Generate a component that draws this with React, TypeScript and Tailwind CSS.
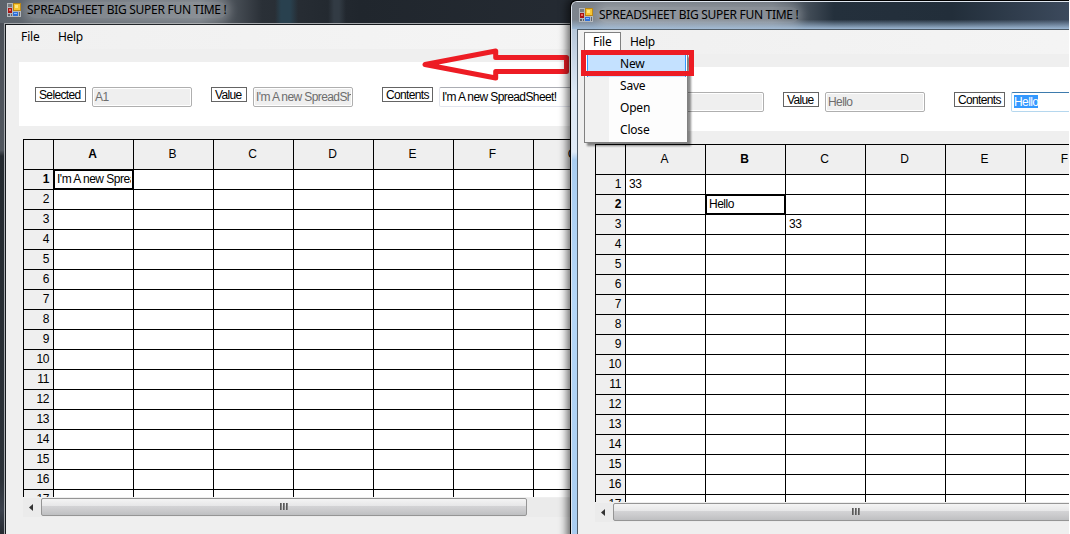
import React from "react";

const COLUMNS = ["A", "B", "C", "D", "E", "F", "G"];
const ROWS = Array.from({ length: 17 }, (_, i) => i + 1);

type Cells = Record<string, string>;

function AppIcon() {
  return (
    <svg width="14" height="14" viewBox="0 0 14 14" shapeRendering="crispEdges" className="shrink-0">
      <rect width="14" height="14" fill="#b4b8bd" />
      <rect x="1" y="1" width="4" height="3" fill="#777b80" />
      <rect x="6" y="0" width="8" height="8" fill="#b98412" />
      <rect x="7" y="1" width="6" height="6" fill="#f7c52f" />
      <rect x="8" y="2" width="3" height="3" fill="#ffe47e" />
      <rect x="1" y="5" width="4" height="5" fill="#a81414" />
      <rect x="2" y="6" width="2" height="2" fill="#ee6a5a" />
      <rect x="1" y="11" width="2" height="2" fill="#5f6368" />
      <rect x="4" y="11" width="1" height="2" fill="#5f6368" />
      <rect x="6" y="9" width="5" height="4" fill="#2f6fd6" />
      <rect x="7" y="10" width="3" height="1" fill="#8db9ff" />
      <rect x="12" y="9" width="1" height="4" fill="#5f6368" />
    </svg>
  );
}

function Caption({ children, width }: { children?: string; width: string }) {
  return (
    <div className={`${width} h-[15px] shrink-0 border border-[#646464] bg-white pl-[3px] text-[12px] leading-[14px] tracking-[-0.65px] text-black`}>
      {children}
    </div>
  );
}

function ReadOnlyBox({ text }: { text: string }) {
  return (
    <div className="h-5 w-[100px] shrink-0 overflow-hidden rounded-[2px] border border-[#afafaf] bg-white p-px">
      <div className="h-full overflow-hidden bg-[#efefef] pl-px text-[12px] leading-[17px] tracking-[-0.6px] whitespace-nowrap text-[#6d6d6d]">
        {text}
      </div>
    </div>
  );
}

function Sheet({ cells, col, row }: { cells: Cells; col: string; row: number }) {
  return (
    <div className="h-[358px] w-[560px] overflow-hidden border-t border-l border-black text-[12px] text-black">
      <div className="flex w-[600px]">
        <div className="h-[30px] w-[30px] shrink-0 border-r border-b border-black bg-[#efefef]" />
        {COLUMNS.map((c) => (
          <div
            key={c}
            className={`h-[30px] w-20 shrink-0 border-r border-b border-black bg-[#efefef] pr-[2px] text-center leading-[29px] ${c === col ? "font-bold" : ""}`}
          >
            {c}
          </div>
        ))}
      </div>
      {ROWS.map((r) => (
        <div key={r} className="flex w-[600px]">
          <div
            className={`h-5 w-[30px] shrink-0 border-r border-b border-black bg-[#efefef] pr-[4px] text-right leading-[19px] tracking-[-0.4px] ${r === row ? "font-bold" : ""}`}
          >
            {r}
          </div>
          {COLUMNS.map((c) => (
            <div
              key={c}
              className={`h-5 w-20 shrink-0 border-r border-b border-black bg-white pl-[3px] leading-[19px] tracking-[-0.5px] whitespace-nowrap ${
                c === col && r === row ? "shadow-[inset_1px_1px_0_#000,inset_-1px_-1px_0_#000]" : ""
              }`}
            >
              <div className="w-[74px] overflow-hidden">{cells[`${c}${r}`] ?? ""}</div>
            </div>
          ))}
        </div>
      ))}
    </div>
  );
}

function ScrollBar() {
  return (
    <div className="mt-px flex h-[19px] w-[560px] items-start bg-[#ebebeb]">
      <div className="flex h-[18px] w-[18px] items-center pl-[6px]">
        <svg width="5" height="7" viewBox="0 0 5 7">
          <path d="M4 0 L4 7 L0 3.5 Z" fill="#333" />
        </svg>
      </div>
      <div className="flex h-[18px] w-[486px] items-center justify-center gap-px rounded-[2px] border border-[#959595] bg-[linear-gradient(#f4f4f4_0%,#e7e7e8_42%,#d3d3d5_46%,#c9c9cb_75%,#bebfc1_100%)] pb-px">
        <i className="h-[7px] w-[2px] bg-[linear-gradient(90deg,#444,#999)]" />
        <i className="h-[7px] w-[2px] bg-[linear-gradient(90deg,#444,#999)]" />
        <i className="h-[7px] w-[2px] bg-[linear-gradient(90deg,#444,#999)]" />
      </div>
    </div>
  );
}

type ClientProps = {
  selected?: string;
  value: string;
  cells: Cells;
  col: string;
  row: number;
  menuOpen?: boolean;
};

function Client({ selected = "", value, cells, col, row, menuOpen }: ClientProps) {
  return (
    <div className="flex w-[600px] flex-col bg-[#efefef] font-['Liberation_Sans',Arial,sans-serif]">
      <div className="flex h-6 items-center bg-[linear-gradient(90deg,#f0f0f0,#f5f5f5)] font-['Noto_Sans',sans-serif] text-[12px] text-black">
        <span className="w-[37px] pl-[15px] tracking-[-0.1px]">{menuOpen ? "" : "File"}</span>
        <span className="pl-[15px] tracking-[-0.3px]">Help</span>
      </div>
      <div className="mt-[13px] ml-[13px] flex h-16 items-start bg-white pt-[25px] pl-4">
        <Caption width="w-[51px]">{menuOpen ? "" : "Selected"}</Caption>
        <div className="w-[6px]" />
        <ReadOnlyBox text={selected} />
        <div className="w-[19px]" />
        <Caption width="w-[36px]">Value</Caption>
        <div className="w-[6px]" />
        <ReadOnlyBox text={value} />
        <div className="w-[29px]" />
        <Caption width="w-[51px]">Contents</Caption>
        <div
          className={`ml-[6px] h-5 w-[160px] rounded-[2px] border bg-white py-[2px] pl-[2px] text-[12px] leading-[14px] tracking-[-0.6px] ${
            menuOpen ? "border-[#b5d7ee] border-t-[#3d7bad]" : "border-[#e3e5ed] border-t-[#abadb3]"
          }`}
        >
          <span className={menuOpen ? "inline-block h-[13px] bg-[#3399ff] text-white" : "text-black"}>{value}</span>
        </div>
      </div>
      <div className="mt-[13px] ml-[17px]">
        <Sheet cells={cells} col={col} row={row} />
        <ScrollBar />
      </div>
      <div className="h-10" />
    </div>
  );
}

function FileMenu() {
  return (
    <div className="absolute top-[32px] left-[584px] font-['Noto_Sans',sans-serif] text-[12px] text-black">
      <div className="h-[22px] w-[37px] border border-b-0 border-[#808080] bg-white pl-[8px] leading-[18px] tracking-[-0.1px]">File</div>
      <div className="h-[89px] w-[104px] border border-[#808080] shadow-[3px_3px_2px_rgba(0,0,0,0.45)]">
        <div className="h-full overflow-hidden bg-[linear-gradient(90deg,#f1f1f1_24px,#fdfdfd_24px)]">
          {["New", "Save", "Open", "Close"].map((item) => (
            <div
              key={item}
              className={`h-[22px] pl-[35px] leading-[18px] tracking-[-0.2px] ${
                item === "New" ? "bg-[#c4e1ff] shadow-[inset_2px_0_0_#fff,inset_3px_0_0_#3399ff,inset_-1px_0_0_#fff,inset_-2px_0_0_#3399ff]" : ""
              }`}
            >
              {item}
            </div>
          ))}
        </div>
      </div>
      <div className="absolute top-[18px] left-[-3px] h-[26px] w-[113px] border-[5px] border-[#ed1c24]" />
    </div>
  );
}

function Title() {
  return (
    <div className="flex items-center gap-[6px]">
      <AppIcon />
      <span className="rounded-full bg-white/20 font-['Noto_Sans',sans-serif] text-[12px] leading-4 tracking-[-0.28px] whitespace-nowrap text-black shadow-[0_0_8px_4px_rgba(255,255,255,0.2)]">
        SPREADSHEET BIG SUPER FUN TIME !
      </span>
    </div>
  );
}

export default function App() {
  return (
    <div className="h-[534px] w-[1070px] bg-white">
      <div className="relative h-[534px] w-[1069px] overflow-hidden">
        <div className="absolute inset-y-0 left-0 w-[600px] overflow-hidden bg-[linear-gradient(#4a4f57_0px,#50565e_150px,#23292f_156px,#2b3138_480px,#3a404c_510px,#252a30_534px)]">
          <div className="flex h-[23px] items-start bg-[linear-gradient(90deg,transparent_275px,#29414f_281px,#29414f_290px,transparent_298px,transparent_328px,#323b44_334px,#323b44_339px,transparent_346px),linear-gradient(90deg,#5c636b_0px,#6d747c_200px,#2a3037_262px,#20262d_360px,#252b33_600px)] pt-[2px] pl-[7px]">
            <Title />
          </div>
          <div className="ml-1 border-t border-l border-[#a5a8ac]">
            <div className="border-t border-l border-[#15191d]">
              <Client selected="A1" value="I'm A new SpreadSheet!" cells={{ A1: "I'm A new SpreadSheet!" }} col="A" row={1} />
            </div>
          </div>
        </div>

        <svg className="absolute top-[46px] left-[420px]" width="152" height="38" viewBox="420 46 152 38">
          <path
            d="M425 64.5 L495.7 51 V57.5 H566.5 V71.5 H495.7 V78 Z"
            fill="none"
            stroke="#ed1c24"
            strokeWidth="5"
            strokeLinejoin="round"
          />
        </svg>

        <div className="absolute top-0 left-[570px] h-[540px] w-[520px] rounded-tl-[6px] bg-black shadow-[-1px_0_9px_2px_rgba(0,0,0,0.6)]">
          <div className="ml-px h-full overflow-hidden pt-px">
            <div className="h-full overflow-hidden rounded-tl-[6px] border-t border-l border-[#dfe6ef] bg-[linear-gradient(#6c7480_0px,#b6c6d8_26px,#dce8f5_90px,#dfeaf6_150px,#a9cdf0_158px,#b5d7f8_300px,#a9cdf0_534px)]">
              <div className="flex h-[27px] items-start bg-[linear-gradient(180deg,transparent_65%,#9db8d4_100%),linear-gradient(90deg,#7d848d_0px,#6b737c_200px,#24303c_262px,#222e3a_380px,#3c4a5d_498px)] pt-[5px] pl-[7px]">
                <Title />
              </div>
              <div className="ml-[5px] border-t border-l border-[#4d5a66]">
                <Client value="Hello" cells={{ A1: "33", B2: "Hello", C3: "33" }} col="B" row={2} menuOpen />
              </div>
            </div>
          </div>
        </div>

        <FileMenu />
      </div>
    </div>
  );
}
